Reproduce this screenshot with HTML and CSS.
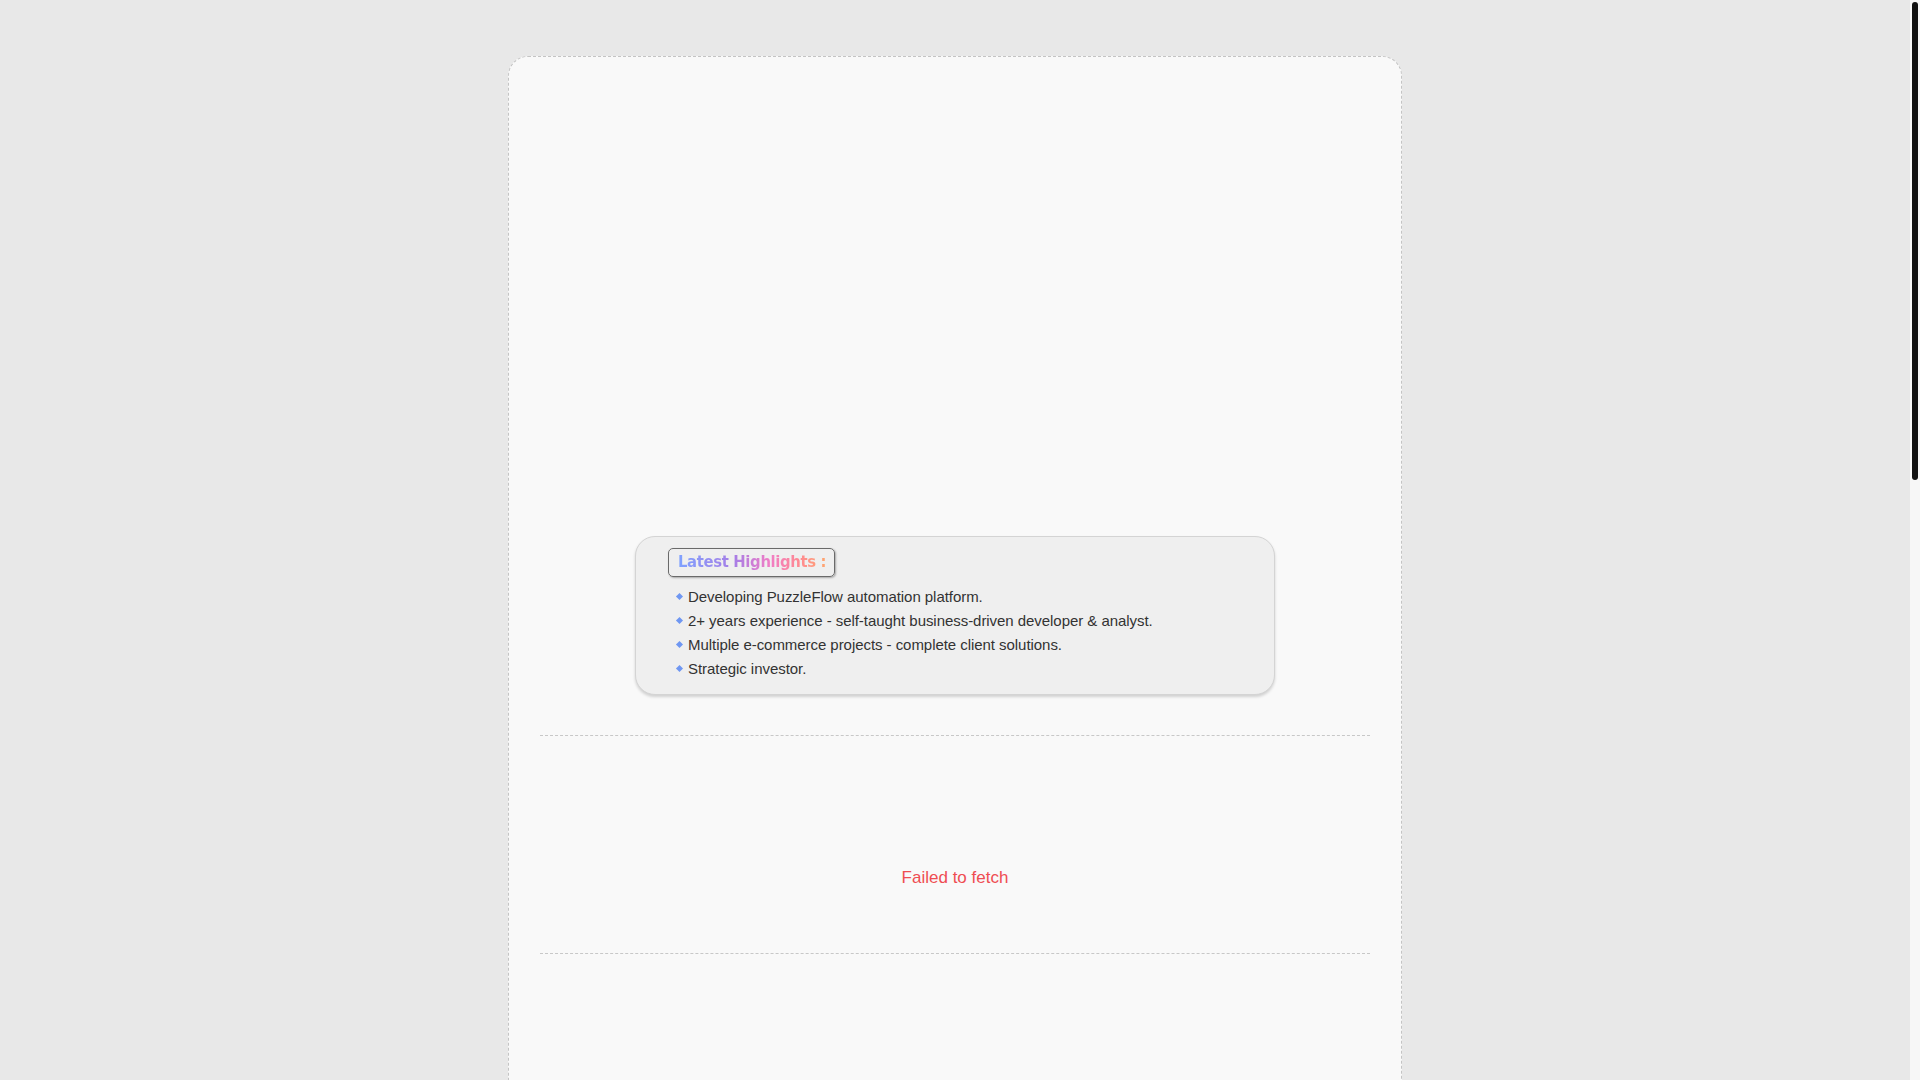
FILE: index.html
```html
<!DOCTYPE html>
<html lang="en">
<head>
<meta charset="utf-8">
<title>Profile</title>
<link rel="stylesheet" href="styles.css">
</head>
<body>
<main class="card">
  <section class="hero"></section>
  <section class="highlights">
    <div class="badge"><span class="badge-text">Latest Highlights :</span></div>
    <ul class="hl-list">
      <li><span class="dot"></span>Developing PuzzleFlow automation platform.</li>
      <li><span class="dot"></span>2+ years experience - self-taught business-driven developer &amp; analyst.</li>
      <li><span class="dot"></span>Multiple e-commerce projects - complete client solutions.</li>
      <li><span class="dot"></span>Strategic investor.</li>
    </ul>
  </section>
  <hr class="divider">
  <section class="feed">
    <p class="error">Failed to fetch</p>
  </section>
  <hr class="divider">
  <section class="rest"></section>
</main>
<div class="scrollbar" aria-hidden="true"><div class="scroll-thumb"></div></div>
</body>
</html>
```

FILE: styles.css
```css
html {
  background: #e8e8e8;
  scrollbar-width: none;
}
::-webkit-scrollbar {
  width: 0;
  height: 0;
}
body {
  margin: 0;
  padding: 56px 10px 56px 0;
  background: #e8e8e8;
  font-family: "Liberation Sans", Arial, sans-serif;
  color: #333;
}
.card {
  width: 894px;
  box-sizing: border-box;
  margin: 0 auto;
  background: #f9f9f9;
  border: 1px dashed #c4c4c4;
  border-radius: 20px;
  padding: 0 31px;
  display: flex;
  flex-direction: column;
}
.hero {
  height: 479px;
}
.highlights {
  align-self: center;
  width: 640px;
  box-sizing: border-box;
  background: #efefef;
  border: 1px solid #d4d4d4;
  border-radius: 20px;
  box-shadow: 0 2px 3px rgba(0, 0, 0, 0.16);
  padding: 11px 32px 14px;
}
.badge {
  display: inline-block;
  border: 1px solid #6a6a6a;
  border-radius: 5px;
  box-shadow: 1px 1px 2px rgba(0, 0, 0, 0.3);
  padding: 3px 8px 4px 9px;
  line-height: 20px;
}
.badge-text {
  font-family: "DejaVu Sans Condensed", "DejaVu Sans", sans-serif;
  font-weight: bold;
  font-size: 16.5px;
  letter-spacing: -0.35px;
  background: linear-gradient(90deg, #7fa2ff 0%, #a77de6 38%, #f07dc6 62%, #ff8a92 82%, #ffa56e 100%);
  -webkit-background-clip: text;
  background-clip: text;
  color: transparent;
}
.hl-list {
  list-style: none;
  margin: 7px 0 0;
  padding: 0 0 0 8px;
}
.hl-list li {
  display: flex;
  align-items: center;
  height: 24px;
  font-size: 15px;
  color: #333;
  letter-spacing: -0.05px;
}
.dot {
  width: 5px;
  height: 5px;
  background: #6f97f2;
  transform: rotate(45deg);
  margin: 0 6px 0 1px;
  flex: none;
}
.divider {
  margin: 40px 0 0;
  border: 0;
  border-top: 1px dashed #c8c8c8;
  height: 0;
}
.feed {
  height: 217px;
  display: flex;
  justify-content: center;
  padding-top: 132px;
  box-sizing: border-box;
}
.error {
  margin: 0;
  font-family: "Liberation Sans", Arial, sans-serif;
  font-size: 17px;
  line-height: 20px;
  color: #ef4d52;
}
.feed + .divider {
  margin-top: 0;
}
.rest {
  height: 1410px;
}
.scrollbar {
  position: fixed;
  top: 0;
  right: 0;
  width: 10px;
  height: 100vh;
  background: #f7f7f7;
}
.scroll-thumb {
  margin: 2px 0 0 2px;
  width: 6px;
  height: 478px;
  border-radius: 3px;
  background: #111111;
}
```
